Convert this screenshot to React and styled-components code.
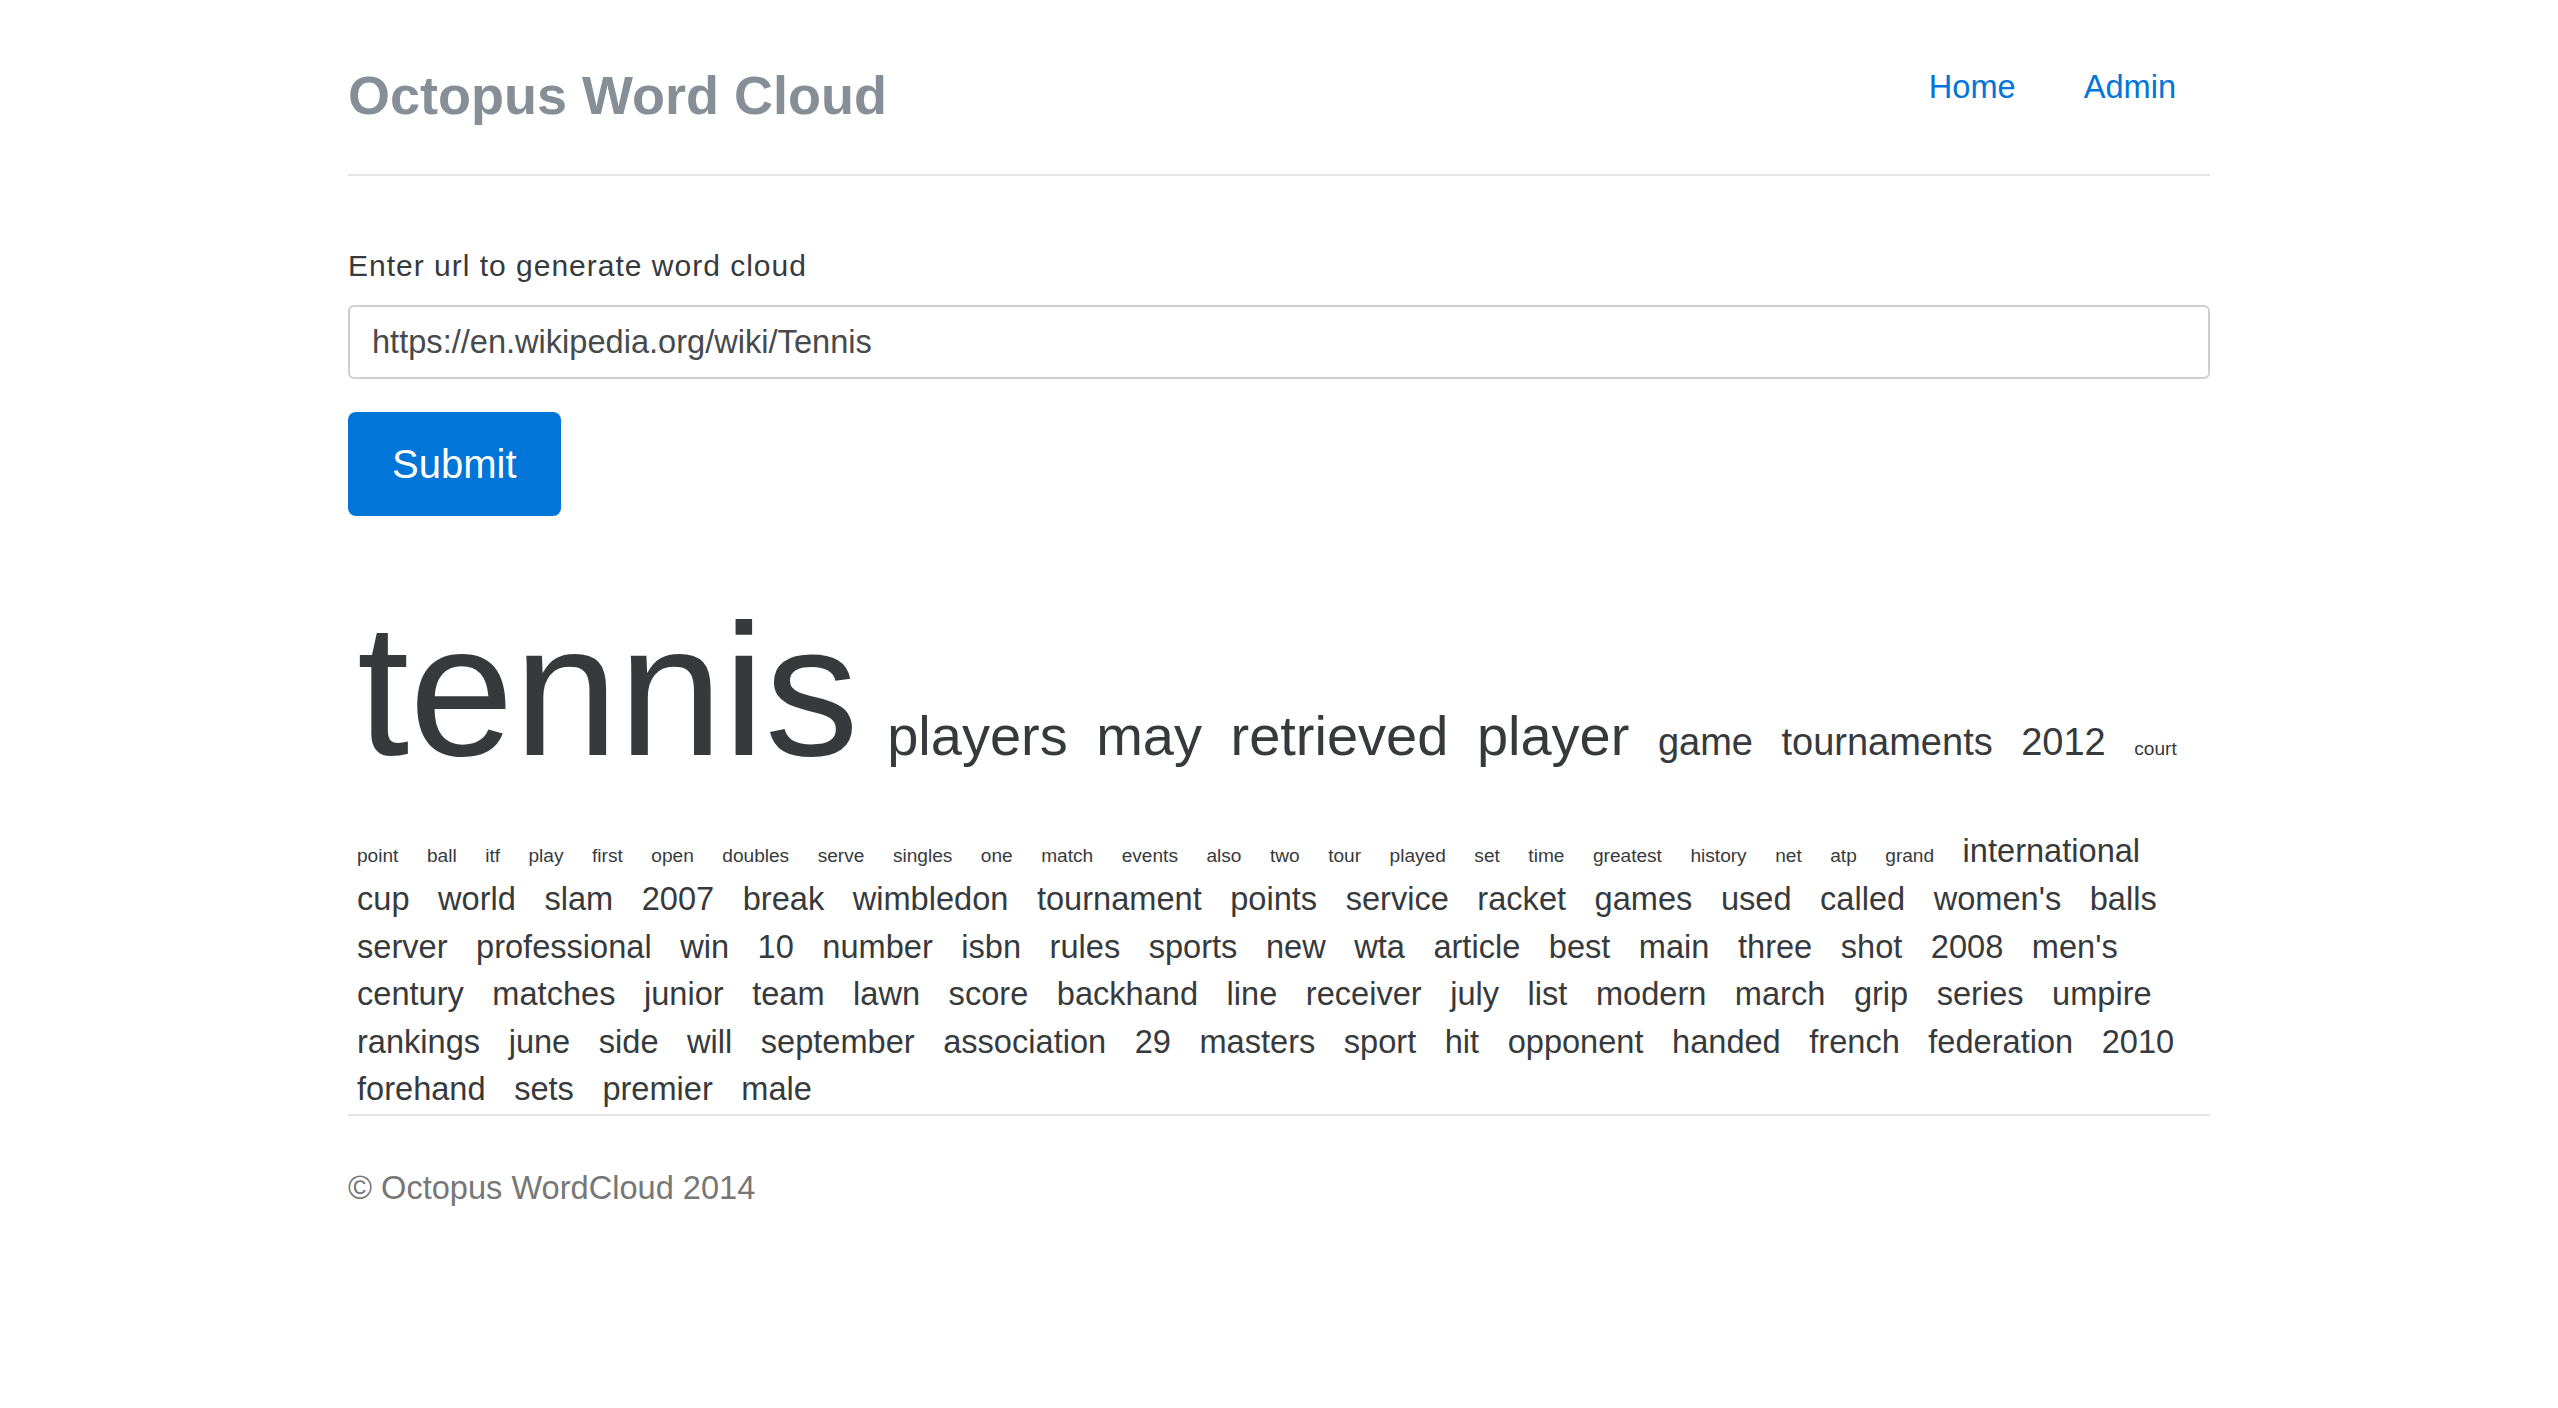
import React from 'react'
import styled, { createGlobalStyle } from 'styled-components'

const GlobalStyle = createGlobalStyle`
  body {
    margin: 0;
    background: #fff;
    font-family: "Liberation Sans", Helvetica, Arial, sans-serif;
    color: #373a3c;
  }
`

// font sizes for the cloud buckets
const XL = 188
const L = 56
const M = 38
const S = 32.6
const XS = 19.1

const words = [
  ['tennis', XL],
  ['players', L],
  ['may', L],
  ['retrieved', L],
  ['player', L],
  ['game', M],
  ['tournaments', M],
  ['2012', M],
  ['court', XS],
  ...'point ball itf play first open doubles serve singles one match events also two tour played set time greatest history net atp grand'
    .split(' ')
    .map(w => [w, XS]),
  ...("international cup world slam 2007 break wimbledon tournament points service racket games used called women's balls " +
    "server professional win 10 number isbn rules sports new wta article best main three shot 2008 men's " +
    'century matches junior team lawn score backhand line receiver july list modern march grip series umpire ' +
    'rankings june side will september association 29 masters sport hit opponent handed french federation 2010 ' +
    'forehand sets premier male')
    .split(' ')
    .map(w => [w, S]),
]

const App = () => {
  return (
    <>
      <GlobalStyle />
      <Container>
        <Header>
          <Title>Octopus Word Cloud</Title>
          <Nav>
            <NavLink href='#'>Home</NavLink>
            <NavLink href='#'>Admin</NavLink>
          </Nav>
        </Header>
        <Form onSubmit={e => e.preventDefault()}>
          <Label htmlFor='url'>Enter url to generate word cloud</Label>
          <Input
            id='url'
            type='text'
            defaultValue='https://en.wikipedia.org/wiki/Tennis'
          />
          <SubmitButton type='submit'>Submit</SubmitButton>
        </Form>
        <Cloud>
          {words.map(([text, size], i) => (
            <Word key={i} $size={size}>
              {text}
            </Word>
          ))}
        </Cloud>
        <Footer>© Octopus WordCloud 2014</Footer>
      </Container>
    </>
  )
}

const Container = styled.div`
  width: 1862px;
  margin: 0 auto;
`

const Header = styled.header`
  display: flex;
  justify-content: space-between;
  align-items: flex-start;
  padding: 62px 0 46px;
  border-bottom: 2px solid #e5e5e5;
`

const Title = styled.h3`
  margin: 0;
  font-size: 54px;
  font-weight: 700;
  line-height: 66px;
  color: #868e96;
`

const Nav = styled.nav`
  display: flex;
`

const NavLink = styled.a`
  padding: 0 34px;
  font-size: 32.6px;
  line-height: 50px;
  color: #0275d8;
  text-decoration: none;
`

const Form = styled.form`
  display: flex;
  flex-direction: column;
  align-items: flex-start;
  margin-top: 67px;
`

const Label = styled.label`
  font-size: 30px;
  letter-spacing: 1px;
  line-height: 45px;
  color: #373a3c;
  margin-bottom: 17px;
`

const Input = styled.input`
  box-sizing: border-box;
  width: 100%;
  height: 74px;
  padding: 0 22px;
  border: 2px solid #cfcfcf;
  border-radius: 6px;
  font-family: inherit;
  font-size: 32.6px;
  color: #464a4c;
  outline: none;
`

const SubmitButton = styled.button`
  margin-top: 33px;
  height: 104px;
  padding: 0 44px;
  border: 0;
  border-radius: 8px;
  background: #0275d8;
  color: #fff;
  font-family: inherit;
  font-size: 40px;
  line-height: 104px;
  cursor: pointer;
`

const Cloud = styled.div`
  margin-top: 37px;
  font-size: 32.6px;
  line-height: 1.46;
`

const Word = styled.span`
  display: inline-block;
  margin: 0 19.5px 0 9px;
  font-size: ${p => p.$size}px;
  line-height: 1.46;
  color: #373a3c;
`

const Footer = styled.footer`
  margin-top: 1px;
  padding-top: 48px;
  border-top: 2px solid #e5e5e5;
  font-size: 32.6px;
  line-height: 1.5;
  color: #777;
`

export default App
